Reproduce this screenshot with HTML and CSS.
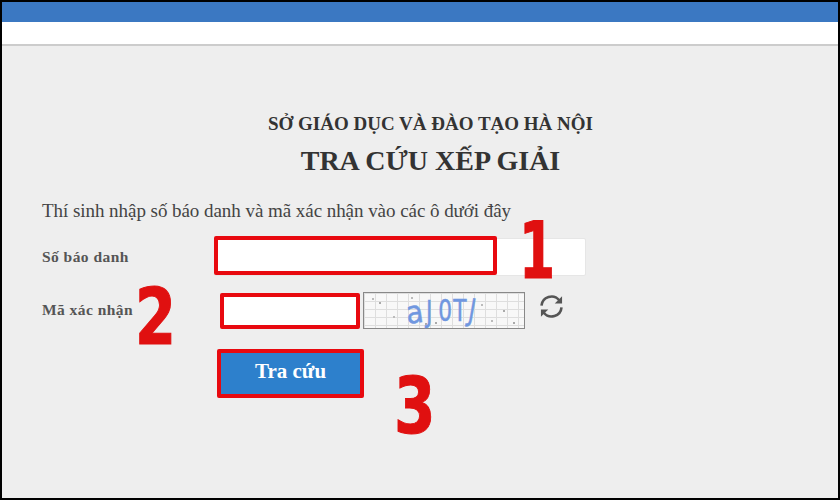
FILE: index.html
```html
<!DOCTYPE html>
<html lang="vi">

<head>
    <meta charset="UTF-8">
    <meta name="viewport" content="width=device-width, initial-scale=1.0">
    <title>Tra cứu xếp giải</title>
    <link rel="stylesheet" href="styles.css">
</head>

<body>
    <div class="frame">
        <div class="topbar"></div>
        <div class="subbar"></div>
        <main class="content">
            <p class="dept">SỞ GIÁO DỤC VÀ ĐÀO TẠO HÀ NỘI</p>
            <h1 class="title">TRA CỨU XẾP GIẢI</h1>
            <p class="intro">Thí sinh nhập số báo danh và mã xác nhận vào các ô dưới đây</p>
            <form class="lookup">
                <div class="row row-id">
                    <label class="label" for="sbd">Số báo danh</label>
                    <div class="id-wrap">
                        <input class="input input-id" id="sbd" type="text">
                        <span class="mark-box"></span>
                    </div>
                </div>
                <div class="row row-code">
                    <label class="label" for="code">Mã xác nhận</label>
                    <input class="input input-code" id="code" type="text">
                    <div class="captcha">
                        <span class="ch ch-a">a</span><span class="ch ch-j">J</span><span class="ch">0</span><span class="ch">T</span><span class="ch ch-l">J</span>
                    </div>
                    <svg class="reload" viewBox="0 0 26 26" width="25" height="25" fill="none" stroke="#555" stroke-width="2.7">
                        <path d="M2.6 12.2A10.4 10.4 0 0 1 21 6.5" />
                        <path d="M23.4 13.8A10.4 10.4 0 0 1 5 19.5" />
                        <path d="M24 2.4v7.6h-7.6z" fill="#555" stroke="none" />
                        <path d="M2 23.6V16h7.6z" fill="#555" stroke="none" />
                    </svg>
                </div>
                <button class="submit" type="button">Tra cứu</button>
            </form>
        </main>
        <span class="num num-1">1</span>
        <span class="num num-2">2</span>
        <span class="num num-3">3</span>
    </div>
</body>

</html>
```

FILE: styles.css
```css
* {
    box-sizing: border-box;
    padding: 0;
    margin: 0;
}

html,
body {
    width: 100%;
    height: 100%;
    overflow: hidden;
}

.frame {
    position: relative;
    display: flex;
    flex-direction: column;
    width: 840px;
    height: 500px;
    border: 2px solid #000;
    background: #eee;
    font-family: "Liberation Serif", serif;
}

.topbar {
    height: 20px;
    background: #3b78c2;
}

.subbar {
    height: 24px;
    background: #fff;
    border-bottom: 2px solid #ccc;
}

.content {
    flex: 1;
    padding: 67px 19px 0 40px;
}

.dept {
    font-size: 19px;
    line-height: 22px;
    font-weight: 700;
    text-align: center;
    color: #333;
}

.title {
    margin-top: 10px;
    font-size: 28px;
    line-height: 32px;
    font-weight: 700;
    text-align: center;
    color: #333;
}

.intro {
    margin-top: 22px;
    font-size: 19px;
    line-height: 24px;
    letter-spacing: -0.05px;
    color: #444;
}

.lookup {
    margin-top: 15px;
}

.row {
    display: flex;
    align-items: center;
}

.label {
    flex: none;
    font-size: 15.5px;
    font-weight: 700;
    letter-spacing: 0.45px;
    color: #555;
}

.row-id .label {
    width: 172px;
}

.row-code {
    margin-top: 15px;
}

.row-code .label {
    width: 178px;
}

.id-wrap {
    position: relative;
    width: 372px;
    height: 38px;
}

.input {
    display: block;
    background: #fff;
    outline: none;
}

.input-id {
    width: 100%;
    height: 100%;
    border: 1px solid #e6e6e6;
    border-radius: 2px;
}

/* red highlight, shorter than the field under it */
.mark-box {
    position: absolute;
    left: 0;
    top: -2px;
    width: 283px;
    height: 39px;
    border: 4px solid #e8090f;
    border-radius: 2px;
}

.input-code {
    width: 140px;
    height: 36px;
    margin-top: 2px;
    border: 4px solid #e8090f;
    border-radius: 2px;
}

.captcha {
    display: flex;
    justify-content: center;
    align-items: center;
    width: 162px;
    height: 37px;
    margin-left: 3px;
    padding-right: 4px;
    border: 1px solid #888;
    font-family: "DejaVu Sans", sans-serif;
    font-size: 31px;
    line-height: 35px;
    color: #7097e0;
    background-color: #f8f8f8;
    background-image:
        radial-gradient(circle at 9px 6px, #bbb 1px, transparent 1.5px),
        radial-gradient(circle at 16px 10px, #aaa 1px, transparent 1.5px),
        radial-gradient(circle at 30px 24px, #bbb 1px, transparent 1.5px),
        radial-gradient(circle at 48px 5px, #bbb 1px, transparent 1.5px),
        radial-gradient(circle at 62px 31px, #aaa 1px, transparent 1.5px),
        radial-gradient(circle at 72px 30px, #aaa 1px, transparent 1.5px),
        radial-gradient(circle at 118px 12px, #bbb 1px, transparent 1.5px),
        radial-gradient(circle at 128px 28px, #bbb 1px, transparent 1.5px),
        radial-gradient(circle at 140px 18px, #aaa 1px, transparent 1.5px),
        radial-gradient(circle at 150px 30px, #aaa 1px, transparent 1.5px),
        linear-gradient(#dedede 1px, transparent 1px),
        linear-gradient(90deg, #dedede 1px, transparent 1px);
    background-size: auto, auto, auto, auto, auto, auto, auto, auto, auto, auto, 11px 8px, 11px 8px;
}

.ch {
    display: inline-block;
    width: 14.5px;
    text-align: center;
    -webkit-text-stroke: 0.5px #7097e0;
    transform: scaleX(0.7);
}

.ch-a {
    width: 17px;
    transform: translateY(2px) rotate(-8deg) scaleX(0.9);
}

.ch-j {
    transform: translateY(1px) scaleX(0.7);
}

.ch-l {
    transform: rotate(10deg) scaleX(0.7);
}

.reload {
    flex: none;
    margin: 0 0 8px 14px;
}

.submit {
    display: block;
    width: 147px;
    height: 49px;
    margin: 20px 0 0 175px;
    border: 4px solid #e8090f;
    border-radius: 2px;
    background: #2d80cc;
    color: #fff;
    font-family: inherit;
    font-size: 21px;
    font-weight: 700;
    padding-bottom: 4px;
}

/* annotation numbers drawn on top of the page */
.num {
    position: absolute;
    font-family: "DejaVu Sans Condensed", "DejaVu Sans", sans-serif;
    font-weight: 700;
    font-size: 78px;
    line-height: 78px;
    color: #e01010;
    -webkit-text-stroke: 1px #e01010;
    transform-origin: left top;
}

.num-1 {
    left: 517px;
    top: 210px;
    transform: scaleX(0.74);
}

.num-2 {
    left: 133px;
    top: 276px;
    transform: scaleX(0.84);
}

.num-3 {
    left: 392px;
    top: 365px;
    transform: scaleX(0.85);
}
```
